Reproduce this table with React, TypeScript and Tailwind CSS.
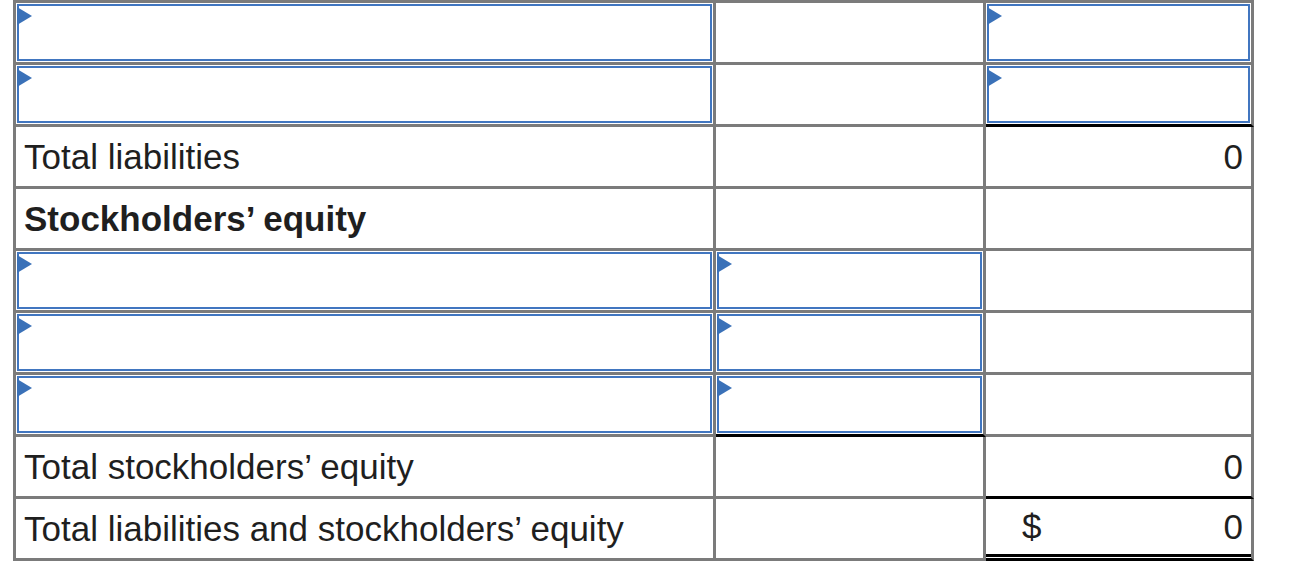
import React from "react";

type CellKind =
  | { t: "input" }
  | { t: "empty" }
  | { t: "text"; v: string; bold?: boolean }
  | { t: "num"; v: string; dollar?: boolean };

type Cell = CellKind & { bottom?: "black" | "double" };

const I: Cell = { t: "input" };
const E: Cell = { t: "empty" };

const rows: Cell[][] = [
  [I, E, I],
  [I, E, { t: "input", bottom: "black" }],
  [{ t: "text", v: "Total liabilities" }, E, { t: "num", v: "0" }],
  [{ t: "text", v: "Stockholders\u2019 equity", bold: true }, E, E],
  [I, I, E],
  [I, I, E],
  [I, { t: "input", bottom: "black" }, E],
  [{ t: "text", v: "Total stockholders\u2019 equity" }, E, { t: "num", v: "0", bottom: "black" }],
  [
    { t: "text", v: "Total liabilities and stockholders\u2019 equity" },
    E,
    { t: "num", v: "0", dollar: true, bottom: "double" },
  ],
];

const widths = ["w-[700px]", "w-[270px]", "w-[268px]"];

function InputBox() {
  return (
    <div className="relative mx-px mt-px mb-px flex-1 border-2 border-[#4176c0] bg-white">
      <svg
        className="absolute left-[-2px] top-[1px]"
        width="15"
        height="18"
        viewBox="0 0 15 18"
      >
        <polygon points="0,0 15,9 0,18" fill="#3a71b8" />
      </svg>
    </div>
  );
}

function CellView({ cell, w }: { cell: Cell; w: string }) {
  const bottom =
    cell.bottom === "black" || cell.bottom === "double"
      ? "border-b-[3px] border-b-black"
      : "border-b-[3px] border-b-[#7b7b7b]";
  return (
    <div
      className={`${w} h-[62px] shrink-0 border-r-[3px] border-r-[#7b7b7b] ${bottom} flex flex-col bg-white`}
    >
      {cell.t === "input" && <InputBox />}
      {cell.t === "text" && (
        <div
          className={`flex flex-1 items-center pl-[8px] text-[35px] leading-none text-[#1f1f1f] ${
            cell.bold ? "font-bold" : ""
          }`}
        >
          {cell.v}
        </div>
      )}
      {cell.t === "num" && (
        <div className="flex flex-1 items-center justify-between pl-[36px] pr-[8px] text-[35px] leading-none text-[#1f1f1f]">
          <span>{cell.dollar ? "$" : ""}</span>
          <span>{cell.v}</span>
        </div>
      )}
      {cell.bottom === "double" && <div className="mb-px h-[3px] bg-black" />}
    </div>
  );
}

export default function App() {
  return (
    <div
      className="h-[570px] w-[1297px] bg-white"
      style={{ fontFamily: '"Liberation Sans", Arial, sans-serif' }}
    >
      <div className="ml-[13px] inline-flex flex-col border-l-[3px] border-t-[3px] border-[#7b7b7b]">
        {rows.map((r, i) => (
          <div key={i} className="flex">
            {r.map((c, j) => (
              <CellView key={j} cell={c} w={widths[j]} />
            ))}
          </div>
        ))}
      </div>
    </div>
  );
}
